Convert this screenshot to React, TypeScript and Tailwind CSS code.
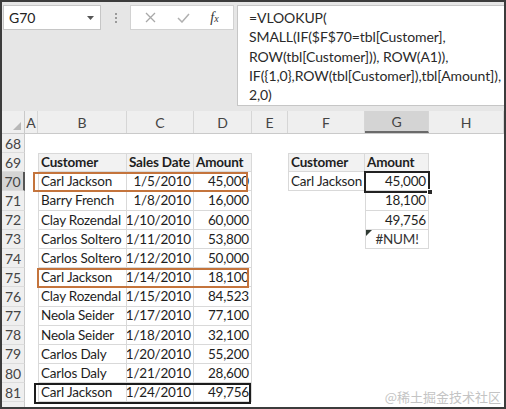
import React from "react";

const font = { fontFamily: "Lato, 'Liberation Sans', sans-serif" };

const cols = [
  { key: "A", w: "w-[13px]" },
  { key: "B", w: "w-[89px]" },
  { key: "C", w: "w-[67px]" },
  { key: "D", w: "w-[58px]" },
  { key: "E", w: "w-[36px]" },
  { key: "F", w: "w-[77px]" },
  { key: "G", w: "w-[64px]" },
  { key: "H", w: "w-[75px]" },
];

const sales = [
  ["Carl Jackson", "1/5/2010", "45,000"],
  ["Barry French", "1/8/2010", "16,000"],
  ["Clay Rozendal", "1/10/2010", "60,000"],
  ["Carlos Soltero", "1/11/2010", "53,800"],
  ["Carlos Soltero", "1/12/2010", "50,000"],
  ["Carl Jackson", "1/14/2010", "18,100"],
  ["Clay Rozendal", "1/15/2010", "84,523"],
  ["Neola Seider", "1/17/2010", "77,100"],
  ["Neola Seider", "1/18/2010", "32,100"],
  ["Carlos Daly", "1/20/2010", "55,200"],
  ["Carlos Daly", "1/21/2010", "28,600"],
  ["Carl Jackson", "1/24/2010", "49,756"],
];

const results: Record<number, string> = { 70: "45,000", 71: "18,100", 72: "49,756", 73: "#NUM!" };

const formula = [
  "=VLOOKUP(",
  "SMALL(IF($F$70=tbl[Customer],",
  "ROW(tbl[Customer])), ROW(A1)),",
  "IF({1,0},ROW(tbl[Customer]),tbl[Amount]),",
  "2,0)",
];

function FormulaBar() {
  return (
    <div className="h-[109px] bg-[#e6e6e6] flex items-start pt-[3px] pl-px">
      {/* name box */}
      <div className="w-[98px] h-[25px] bg-white border border-[#c6c6c6] flex items-center justify-between pl-[5px] pr-[6px]">
        <span className="text-[14px] text-[#222]">G70</span>
        <svg width="7" height="4" viewBox="0 0 7 4">
          <path d="M0 0h7L3.5 4z" fill="#555" />
        </svg>
      </div>
      <div className="w-[29px] h-[25px] flex flex-col items-center justify-center gap-[2px]">
        <span className="w-[2px] h-[2px] bg-[#9a9a9a]" />
        <span className="w-[2px] h-[2px] bg-[#9a9a9a]" />
        <span className="w-[2px] h-[2px] bg-[#9a9a9a]" />
      </div>
      {/* cancel / enter / fx */}
      <div className="w-[104px] h-[25px] bg-white border border-[#d2d2d2] flex items-center justify-around px-[4px]">
        <svg width="11" height="11" viewBox="0 0 11 11">
          <path d="M1 1l9 9M10 1l-9 9" stroke="#a8a8a8" strokeWidth="1.3" />
        </svg>
        <svg width="13" height="10" viewBox="0 0 13 10">
          <path d="M1 5l4 4 7-8" stroke="#b0b0b0" strokeWidth="1.5" fill="none" />
        </svg>
        <span className="text-[14px] text-[#333] italic" style={{ fontFamily: "'Liberation Serif', serif" }}>
          f<span className="text-[10px]">x</span>
        </span>
      </div>
      {/* formula text */}
      <div className="ml-[3px] flex-1 h-[101px] bg-white border border-[#c6c6c6] border-r-0 pl-[11px] pt-[2px] text-[14px] leading-[19.3px] text-[#2a2a2a] whitespace-nowrap tracking-[-0.1px]">
        {formula.map((l) => (
          <div key={l}>{l}</div>
        ))}
      </div>
    </div>
  );
}

function ColumnHeaders() {
  return (
    <div className="flex h-[23px] bg-[#efefef] border-b border-[#cacaca]">
      <div className="w-[23px] border-r border-[#cacaca] flex items-end justify-end pr-[3px] pb-[3px]">
        <svg width="8" height="8" viewBox="0 0 8 8">
          <path d="M8 0V8H0z" fill="#b8b8b8" />
        </svg>
      </div>
      {cols.map((c) => (
        <div
          key={c.key}
          className={`${c.w} h-full flex items-center justify-center text-[14px] text-[#444] border-r border-[#d6d6d6] ${
            c.key === "G" ? "bg-[#d4d4d4] border-b-2 border-b-[#6a6a6a]" : ""
          }`}
        >
          {c.key}
        </div>
      ))}
    </div>
  );
}

function RowHeader({ n, h }: { n?: number; h: string }) {
  const sel = n === 70;
  return (
    <div
      className={`w-[23px] ${h} flex items-center justify-center text-[14px] text-[#444] border-b border-[#dcdcdc] ${
        sel ? "bg-[#d4d4d4] border-r-2 border-r-[#555]" : "bg-[#efefef] border-r border-r-[#cacaca]"
      }`}
    >
      {n}
    </div>
  );
}

function Row({ n }: { n: number }) {
  const i = n - 70;
  const isHead = n === 69;
  const rec = i >= 0 && i < sales.length ? sales[i] : null;
  const tCell =
    "border-r border-b border-[#d9d9d9] flex items-center px-[2px] text-[13.5px] tracking-[-0.2px] text-[#1e1e1e] whitespace-nowrap overflow-hidden";
  const h = "h-[19.2px]";

  let b: React.ReactNode = <div className="w-[89px]" />;
  let c: React.ReactNode = <div className="w-[67px]" />;
  let d: React.ReactNode = <div className="w-[58px]" />;
  if (isHead) {
    b = <div className={`w-[89px] ${tCell} border-l border-t bg-[#f2f2f2] font-bold`}>Customer</div>;
    c = <div className={`w-[67px] ${tCell} border-t bg-[#f2f2f2] font-bold`}>Sales Date</div>;
    d = <div className={`w-[58px] ${tCell} border-t bg-[#f2f2f2] font-bold`}>Amount</div>;
  } else if (rec) {
    b = <div className={`w-[89px] ${tCell} border-l`}>{rec[0]}</div>;
    c = <div className={`w-[67px] ${tCell} justify-end`}>{rec[1]}</div>;
    d = <div className={`w-[58px] ${tCell} justify-end`}>{rec[2]}</div>;
  }

  let f: React.ReactNode = <div className="w-[77px]" />;
  let g: React.ReactNode = <div className="w-[64px]" />;
  if (isHead) {
    f = <div className={`w-[77px] ${tCell} border-l border-t bg-[#f2f2f2] font-bold`}>Customer</div>;
    g = <div className={`w-[64px] ${tCell} border-t bg-[#f2f2f2] font-bold`}>Amount</div>;
  } else if (results[n]) {
    if (n === 70) f = <div className={`w-[77px] ${tCell} border-l`}>Carl Jackson</div>;
    const err = n === 73;
    g = (
      <div className={`w-[64px] ${tCell} ${n > 70 ? "border-l" : ""} ${err ? "justify-center relative text-[#333]" : "justify-end"}`}>
        {err && (
          <svg className="absolute left-0 top-0" width="6" height="6" viewBox="0 0 6 6">
            <path d="M0 0h6L0 6z" fill="#2f3a33" />
          </svg>
        )}
        {results[n]}
      </div>
    );
  }

  return (
    <div className={`flex ${h}`}>
      <RowHeader n={n} h={h} />
      <div className="w-[13px]" />
      {b}
      {c}
      {d}
      <div className="w-[36px]" />
      {f}
      {g}
      <div className="w-[75px]" />
    </div>
  );
}

export default function App() {
  const rows = Array.from({ length: 13 }, (_, k) => 69 + k);
  return (
    <div
      className="relative w-[506px] h-[409px] overflow-hidden bg-white border-2 border-[#3c3c3c]"
      style={font}
    >
      <FormulaBar />
      <ColumnHeaders />
      <div className="flex h-[19px]">
        <RowHeader n={68} h="h-[19px]" />
      </div>
      {rows.map((n) => (
        <Row key={n} n={n} />
      ))}
      <div className="flex h-[8px]">
        <RowHeader h="h-[8px]" />
      </div>

      {/* annotation boxes */}
      <div className="absolute left-[31px] top-[170px] w-[215px] h-[20px] border-2 border-[#c4743c]" />
      <div className="absolute left-[35px] top-[266px] w-[212px] h-[20px] border-2 border-[#c4743c]" />
      <div className="absolute left-[32px] top-[381px] w-[217px] h-[21px] border-2 border-[#1c1c1c]" />

      {/* active cell G70 */}
      <div className="absolute left-[362px] top-[169px] w-[66px] h-[22px] border-2 border-[#222]" />
      <div className="absolute left-[425px] top-[187px] w-[6px] h-[6px] bg-[#2a2a2a] border border-white" />

      <div
        className="absolute right-[3px] bottom-[1px] text-[13px] text-[#c4c4c4]"
        style={{ fontFamily: "'Noto Sans CJK SC', sans-serif" }}
      >
        @稀土掘金技术社区
      </div>
    </div>
  );
}
